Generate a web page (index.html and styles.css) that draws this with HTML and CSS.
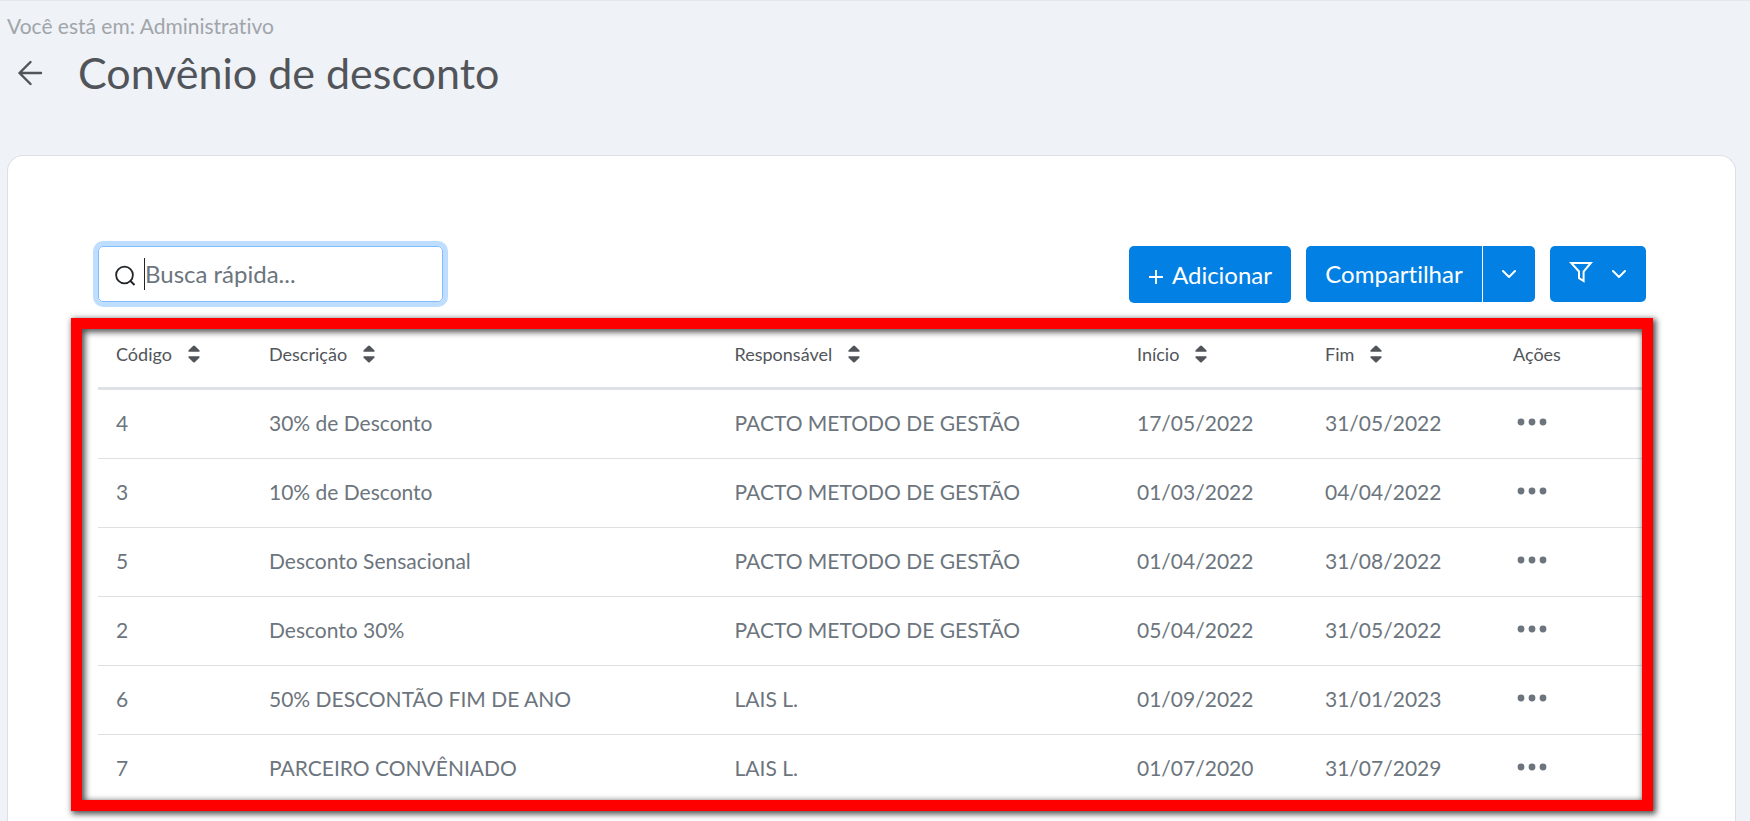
FILE: index.html
```html
<!DOCTYPE html>
<html lang="pt-BR">
<head>
<meta charset="utf-8">
<meta name="viewport" content="width=device-width, initial-scale=1">
<title>Convênio de desconto</title>
<link rel="stylesheet" href="styles.css">
</head>
<body>
<svg hidden>
  <symbol id="sort" viewBox="0 0 12 18"><path d="M6 .5 Q6.5 .5 7 1 L11.6 5.4 Q12 6.6 11 6.7 H1 Q0 6.6 .4 5.4 L5 1 Q5.5 .5 6 .5Z M6 17.5 Q6.5 17.5 7 17 L11.6 12.6 Q12 11.4 11 11.3 H1 Q0 11.4 .4 12.6 L5 17 Q5.5 17.5 6 17.5Z"/></symbol>
  <symbol id="chevron" viewBox="0 0 16 10"><path d="M2 2 L8 8 L14 2" fill="none" stroke="currentColor" stroke-width="2" stroke-linecap="round" stroke-linejoin="round"/></symbol>
  <symbol id="dots" viewBox="0 0 30 8"><circle cx="4" cy="4" r="3.4"/><circle cx="15" cy="4" r="3.4"/><circle cx="26" cy="4" r="3.4"/></symbol>
</svg>
<header class="page-header">
  <p class="breadcrumb">Você está em: Administrativo</p>
  <div class="title-row">
    <button class="back" type="button" aria-label="Voltar">
      <svg width="26" height="26" viewBox="0 0 26 26"><path d="M12.5 2 L1.5 13 L12.5 24 M1.5 13 H23" fill="none" stroke="currentColor" stroke-width="2.4" stroke-linecap="round" stroke-linejoin="round"/></svg>
    </button>
    <h1 class="title">Convênio de desconto</h1>
  </div>
</header>
<main class="card">
  <div class="toolbar">
    <label class="search">
      <svg width="22" height="26" viewBox="0 0 22 26"><circle cx="9.5" cy="14" r="8.4" fill="none" stroke="currentColor" stroke-width="1.8"/><path d="M15 19.5 L19.5 24" stroke="currentColor" stroke-width="2"/></svg>
      <span class="caret"></span>
      <input class="search-input" type="text" placeholder="Busca rápida..." aria-label="Busca rápida">
    </label>
    <div class="actions">
      <button class="btn btn-add" type="button">
        <svg width="16" height="20" viewBox="0 0 16 20"><path d="M8 5 V19 M1 12 H15" stroke="currentColor" stroke-width="1.8"/></svg>
        Adicionar
      </button>
      <div class="btn-group">
        <button class="btn btn-share" type="button">Compartilhar</button>
        <button class="btn btn-more" type="button" aria-label="Mais opções"><svg width="16" height="10"><use href="#chevron"/></svg></button>
      </div>
      <button class="btn btn-filter" type="button" aria-label="Filtros">
        <svg class="funnel" width="24" height="22" viewBox="0 0 24 22"><path d="M2.2 2 H21.8 L14.6 10.5 V20 L10 17.2 V10.5 Z" fill="none" stroke="currentColor" stroke-width="2"/></svg>
        <svg width="16" height="10"><use href="#chevron"/></svg>
      </button>
    </div>
  </div>
  <div class="table-area">
    <table class="table">
      <colgroup><col class="c-code"><col><col class="c-resp"><col class="c-date"><col class="c-date"><col class="c-act"></colgroup>
      <thead>
        <tr>
          <th><button class="sort" type="button">Código <svg width="12" height="18"><use href="#sort"/></svg></button></th>
          <th><button class="sort" type="button">Descrição <svg width="12" height="18"><use href="#sort"/></svg></button></th>
          <th><button class="sort" type="button">Responsável <svg width="12" height="18"><use href="#sort"/></svg></button></th>
          <th><button class="sort" type="button">Início <svg width="12" height="18"><use href="#sort"/></svg></button></th>
          <th><button class="sort" type="button">Fim <svg width="12" height="18"><use href="#sort"/></svg></button></th>
          <th>Ações</th>
        </tr>
      </thead>
      <tbody>
        <tr><td>4</td><td>30% de Desconto</td><td>PACTO METODO DE GESTÃO</td><td>17/05/2022</td><td>31/05/2022</td><td><button class="dots" type="button" aria-label="Ações"><svg width="30" height="8"><use href="#dots"/></svg></button></td></tr>
        <tr><td>3</td><td>10% de Desconto</td><td>PACTO METODO DE GESTÃO</td><td>01/03/2022</td><td>04/04/2022</td><td><button class="dots" type="button" aria-label="Ações"><svg width="30" height="8"><use href="#dots"/></svg></button></td></tr>
        <tr><td>5</td><td>Desconto Sensacional</td><td>PACTO METODO DE GESTÃO</td><td>01/04/2022</td><td>31/08/2022</td><td><button class="dots" type="button" aria-label="Ações"><svg width="30" height="8"><use href="#dots"/></svg></button></td></tr>
        <tr><td>2</td><td>Desconto 30%</td><td>PACTO METODO DE GESTÃO</td><td>05/04/2022</td><td>31/05/2022</td><td><button class="dots" type="button" aria-label="Ações"><svg width="30" height="8"><use href="#dots"/></svg></button></td></tr>
        <tr><td>6</td><td>50% DESCONTÃO FIM DE ANO</td><td>LAIS L.</td><td>01/09/2022</td><td>31/01/2023</td><td><button class="dots" type="button" aria-label="Ações"><svg width="30" height="8"><use href="#dots"/></svg></button></td></tr>
        <tr><td>7</td><td>PARCEIRO CONVÊNIADO</td><td>LAIS L.</td><td>01/07/2020</td><td>31/07/2029</td><td><button class="dots" type="button" aria-label="Ações"><svg width="30" height="8"><use href="#dots"/></svg></button></td></tr>
      </tbody>
    </table>
    <div class="highlight"></div>
  </div>
</main>
</body>
</html>
```
FILE: styles.css
```css
* { box-sizing: border-box; }
body {
  margin: 0;
  min-height: 100vh;
  display: flex;
  flex-direction: column;
  background: #eff2f7;
  border-top: 1px solid #e4e7ec;
  color: #51555a;
  font-family: Lato, "Open Sans", sans-serif;
  font-variant-ligatures: none;
}
button { font-family: inherit; font-variant-ligatures: none; color: inherit; background: none; border: 0; padding: 0; cursor: pointer; }
svg { display: block; flex: none; fill: currentColor; }
svg[hidden] { display: none; }

.page-header { padding: 10px 7px 0; height: 154px; }
.breadcrumb { margin: 0; font-size: 21px; line-height: 30px; color: #a1a5aa; }
.title-row { display: flex; align-items: center; padding-left: 11px; gap: 34px; }
.back { display: block; }
.title { margin: 0; font-size: 43px; line-height: 64px; font-weight: 400; }

.card {
  flex: 1;
  margin: 0 14px 0 7px;
  padding: 90px 89px 0 90px;
  background: #fff;
  border: 1px solid #dcdfe6;
  border-bottom: 0;
  border-radius: 16px 16px 0 0;
}
.toolbar { display: flex; justify-content: space-between; align-items: flex-start; height: 57px; }
.search {
  display: flex;
  align-items: center;
  width: 345px;
  height: 56px;
  padding: 0 16px;
  border: 1px solid #80bdff;
  border-radius: 5px;
  box-shadow: 0 0 0 5px #bfdeff;
  color: #212529;
}
.caret { width: 1px; height: 32px; margin-left: 7px; background: #212529; }
.search-input { flex: 1; min-width: 0; border: 0; outline: 0; padding: 0; background: none; font: 400 24px/36px Lato, "Open Sans", sans-serif; color: #51555a; }
.search-input::placeholder { color: #6c757d; opacity: 1; }

.actions { display: flex; gap: 15px; }
.btn { display: flex; align-items: center; justify-content: center; height: 56px; background: #0380e3; color: #fff; border-radius: 5px; font-size: 24px; }
.btn-add { width: 162px; height: 57px; gap: 8px; }
.btn-group { display: flex; }
.btn-share { width: 177px; padding-bottom: 2px; border-radius: 5px 0 0 5px; border-right: 1px solid #fff; }
.btn-more { width: 52px; border-radius: 0 5px 5px 0; }
.btn-filter { width: 96px; gap: 18px; }
.funnel { margin-bottom: 4px; }

.table-area { position: relative; margin-top: 15px; }
.table { width: 100%; table-layout: fixed; border-collapse: separate; border-spacing: 0; }
.c-code { width: 153px; }
.c-resp { width: 26%; }
.c-date { width: 188px; }
.c-act { width: 151px; }
th { padding: 22px 0 19px 18px; height: 72px; border-bottom: 3px solid #dee2e6; text-align: left; font-size: 18px; font-weight: 400; line-height: 28px; }
.sort { display: flex; align-items: center; gap: 16px; font-size: 18px; line-height: 28px; }
td { padding: 0 0 3px 18px; height: 69px; border-bottom: 1px solid #dee0e3; font-size: 21px; line-height: 32px; color: #6c757d; white-space: nowrap; }
.dots { display: block; padding: 4px 4px 6px; }
.highlight {
  position: absolute;
  inset: 0 -7px -7px -27px;
  border: 11px solid #f00;
  box-shadow: 2px 2px 6px 1px rgba(0, 0, 0, .7), inset 2px 2px 6px 1px rgba(0, 0, 0, .7);
  pointer-events: none;
}
```
